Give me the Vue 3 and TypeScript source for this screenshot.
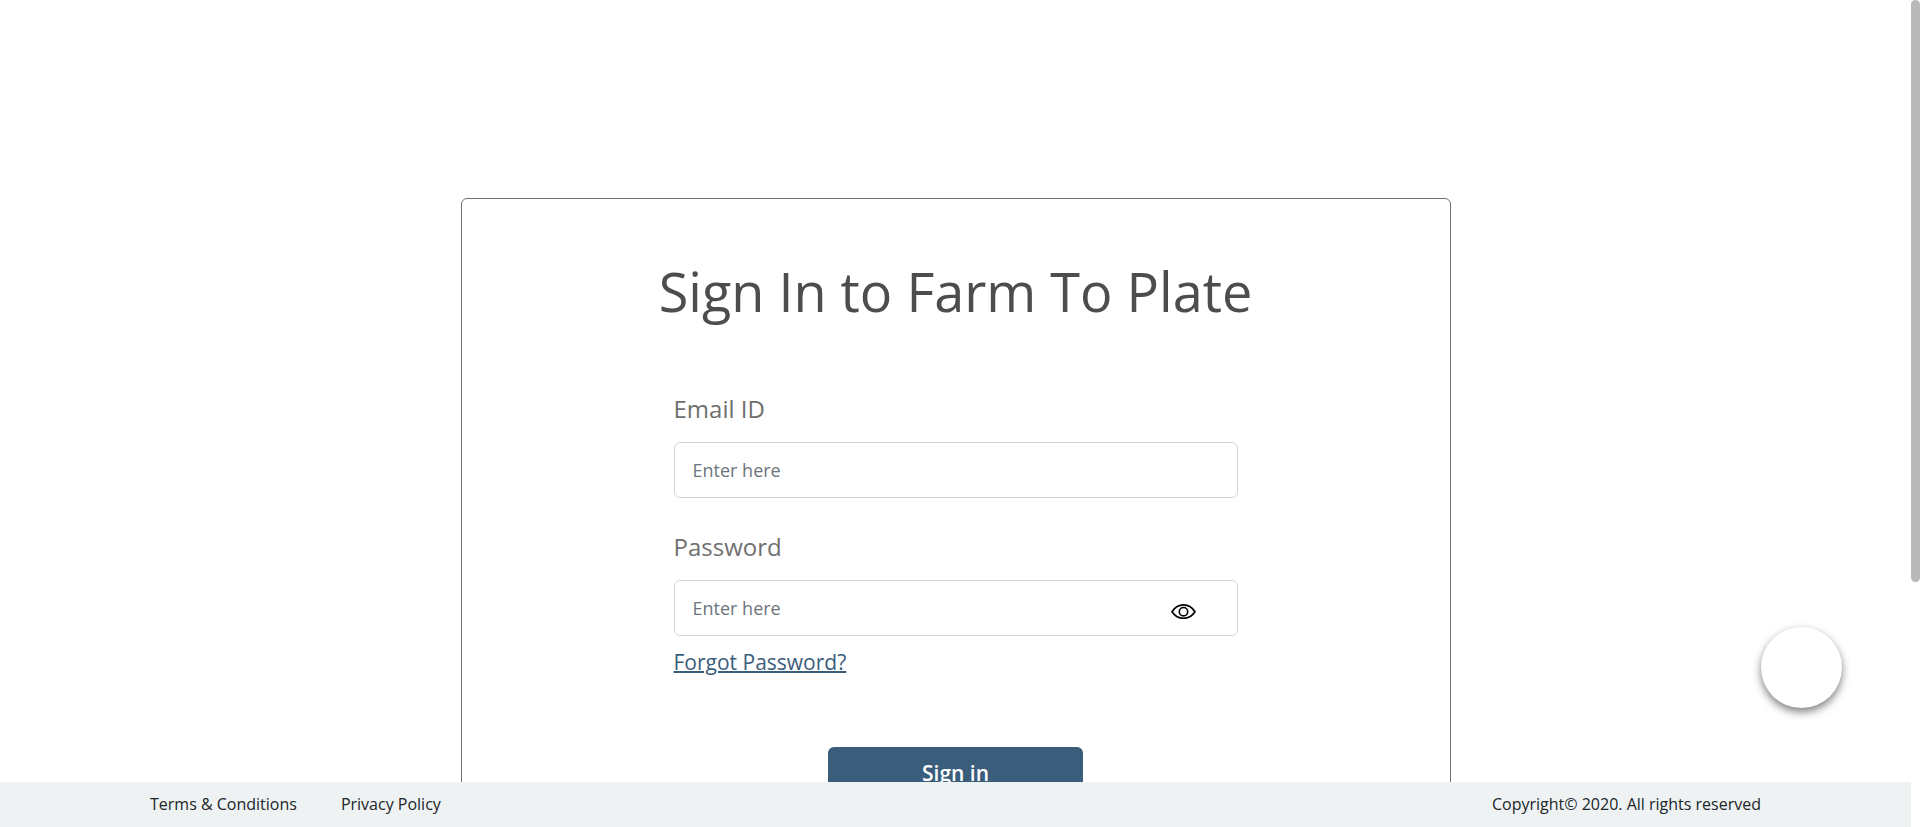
<script setup lang="ts">
import { ref } from 'vue'

const email = ref('')
const password = ref('')
const showPassword = ref(false)
</script>

<template>
  <div class="shell">
    <div class="viewport">
      <main class="content">
        <form class="card" @submit.prevent>
          <h1 class="title">Sign In to Farm To Plate</h1>
          <div class="fields">
            <div class="field">
              <label for="email">Email ID</label>
              <input id="email" v-model="email" type="email" placeholder="Enter here" />
            </div>
            <div class="field">
              <label for="password">Password</label>
              <div class="password">
                <input
                  id="password"
                  v-model="password"
                  :type="showPassword ? 'text' : 'password'"
                  placeholder="Enter here"
                />
                <button
                  class="eye"
                  type="button"
                  aria-label="Show password"
                  @click="showPassword = !showPassword"
                >
                  <svg viewBox="0 0 25 15" width="25" height="15" fill="none" stroke="#000">
                    <path
                      d="M1 7.7C4 3.2 8 .9 12.5 .9S21 3.2 24 7.7C21 12.1 17 14.3 12.5 14.3S4 12.1 1 7.7Z"
                      stroke-width="1.7"
                      stroke-linejoin="round"
                    />
                    <circle cx="12.5" cy="7.7" r="4.2" stroke-width="1.6" />
                  </svg>
                </button>
              </div>
            </div>
            <a class="forgot" href="#">Forgot Password?</a>
          </div>
          <button class="submit" type="submit">Sign in</button>
        </form>
      </main>
      <footer class="footer">
        <nav class="links">
          <a href="#">Terms &amp; Conditions</a>
          <a href="#">Privacy Policy</a>
        </nav>
        <span>Copyright© 2020. All rights reserved</span>
      </footer>
      <button class="chat" type="button" aria-label="Open chat"></button>
    </div>
    <div class="track"><div class="thumb"></div></div>
  </div>
</template>

<style>
body {
  margin: 0;
  background: #fff;
}
</style>

<style scoped>
.shell {
  display: flex;
  height: 100vh;
  overflow: hidden;
  font-family: 'Open Sans', 'Noto Sans', sans-serif;
  color: #212529;
}
.shell * {
  box-sizing: border-box;
}
.viewport {
  position: relative;
  flex: 1;
  display: flex;
  flex-direction: column;
  min-width: 0;
}
.content {
  flex: 1;
  min-height: 0;
  overflow-y: auto;
  scrollbar-width: none;
  padding: 198px 24px 0;
}
.card {
  display: flex;
  flex-direction: column;
  align-items: center;
  max-width: 990px;
  margin: 0 auto;
  padding: 50px 24px 64px;
  border: 1px solid #707070;
  border-radius: 6px;
}
.title {
  margin: 0 0 58px;
  font-size: 54px;
  line-height: 84px;
  font-weight: 400;
  color: #4d4d4d;
}
.fields {
  display: flex;
  flex-direction: column;
  align-items: flex-start;
  width: 100%;
  max-width: 564px;
}
.field {
  width: 100%;
  margin-bottom: 31px;
}
.field:nth-child(2) {
  margin-bottom: 10px;
}
.field label {
  display: block;
  margin-bottom: 15px;
  font-size: 24px;
  line-height: 36px;
  color: #707070;
}
.field input {
  display: block;
  width: 100%;
  height: 56px;
  padding: 0 18px;
  border: 1px solid #ced4da;
  border-radius: 6px;
  background: #fff;
  font: inherit;
  font-size: 18px;
  color: #495057;
}
.field input::placeholder {
  color: #6c757d;
  opacity: 1;
}
.password {
  position: relative;
}
.eye {
  position: absolute;
  top: 24px;
  right: 42px;
  padding: 0;
  border: 0;
  background: none;
  cursor: pointer;
}
.eye svg {
  display: block;
}
.forgot {
  font-size: 21px;
  line-height: 33px;
  color: #3a5d7c;
  text-decoration: underline;
  text-decoration-thickness: 2px;
}
.submit {
  width: 255px;
  height: 52px;
  margin-top: 68px;
  padding: 0;
  border: 0;
  border-radius: 6px;
  background: #3a5d7c;
  color: #fff;
  font: inherit;
  font-size: 21px;
  font-weight: 600;
}
.footer {
  display: flex;
  justify-content: space-between;
  align-items: center;
  height: 45px;
  padding: 0 150px 2px;
  background: #eef2f3;
  font-size: 16px;
  line-height: 24px;
}
.links {
  display: flex;
  gap: 44px;
}
.links a {
  color: inherit;
  text-decoration: none;
}
.chat {
  position: absolute;
  right: 69px;
  bottom: 119px;
  width: 81px;
  height: 81px;
  padding: 0;
  border: 0;
  border-radius: 50%;
  background: #fff;
  box-shadow: 0 4px 8px rgba(0, 0, 0, 0.5);
}
.track {
  width: 9px;
}
.thumb {
  height: 582px;
  border-radius: 5px;
  background: #b9b9b9;
}
</style>
